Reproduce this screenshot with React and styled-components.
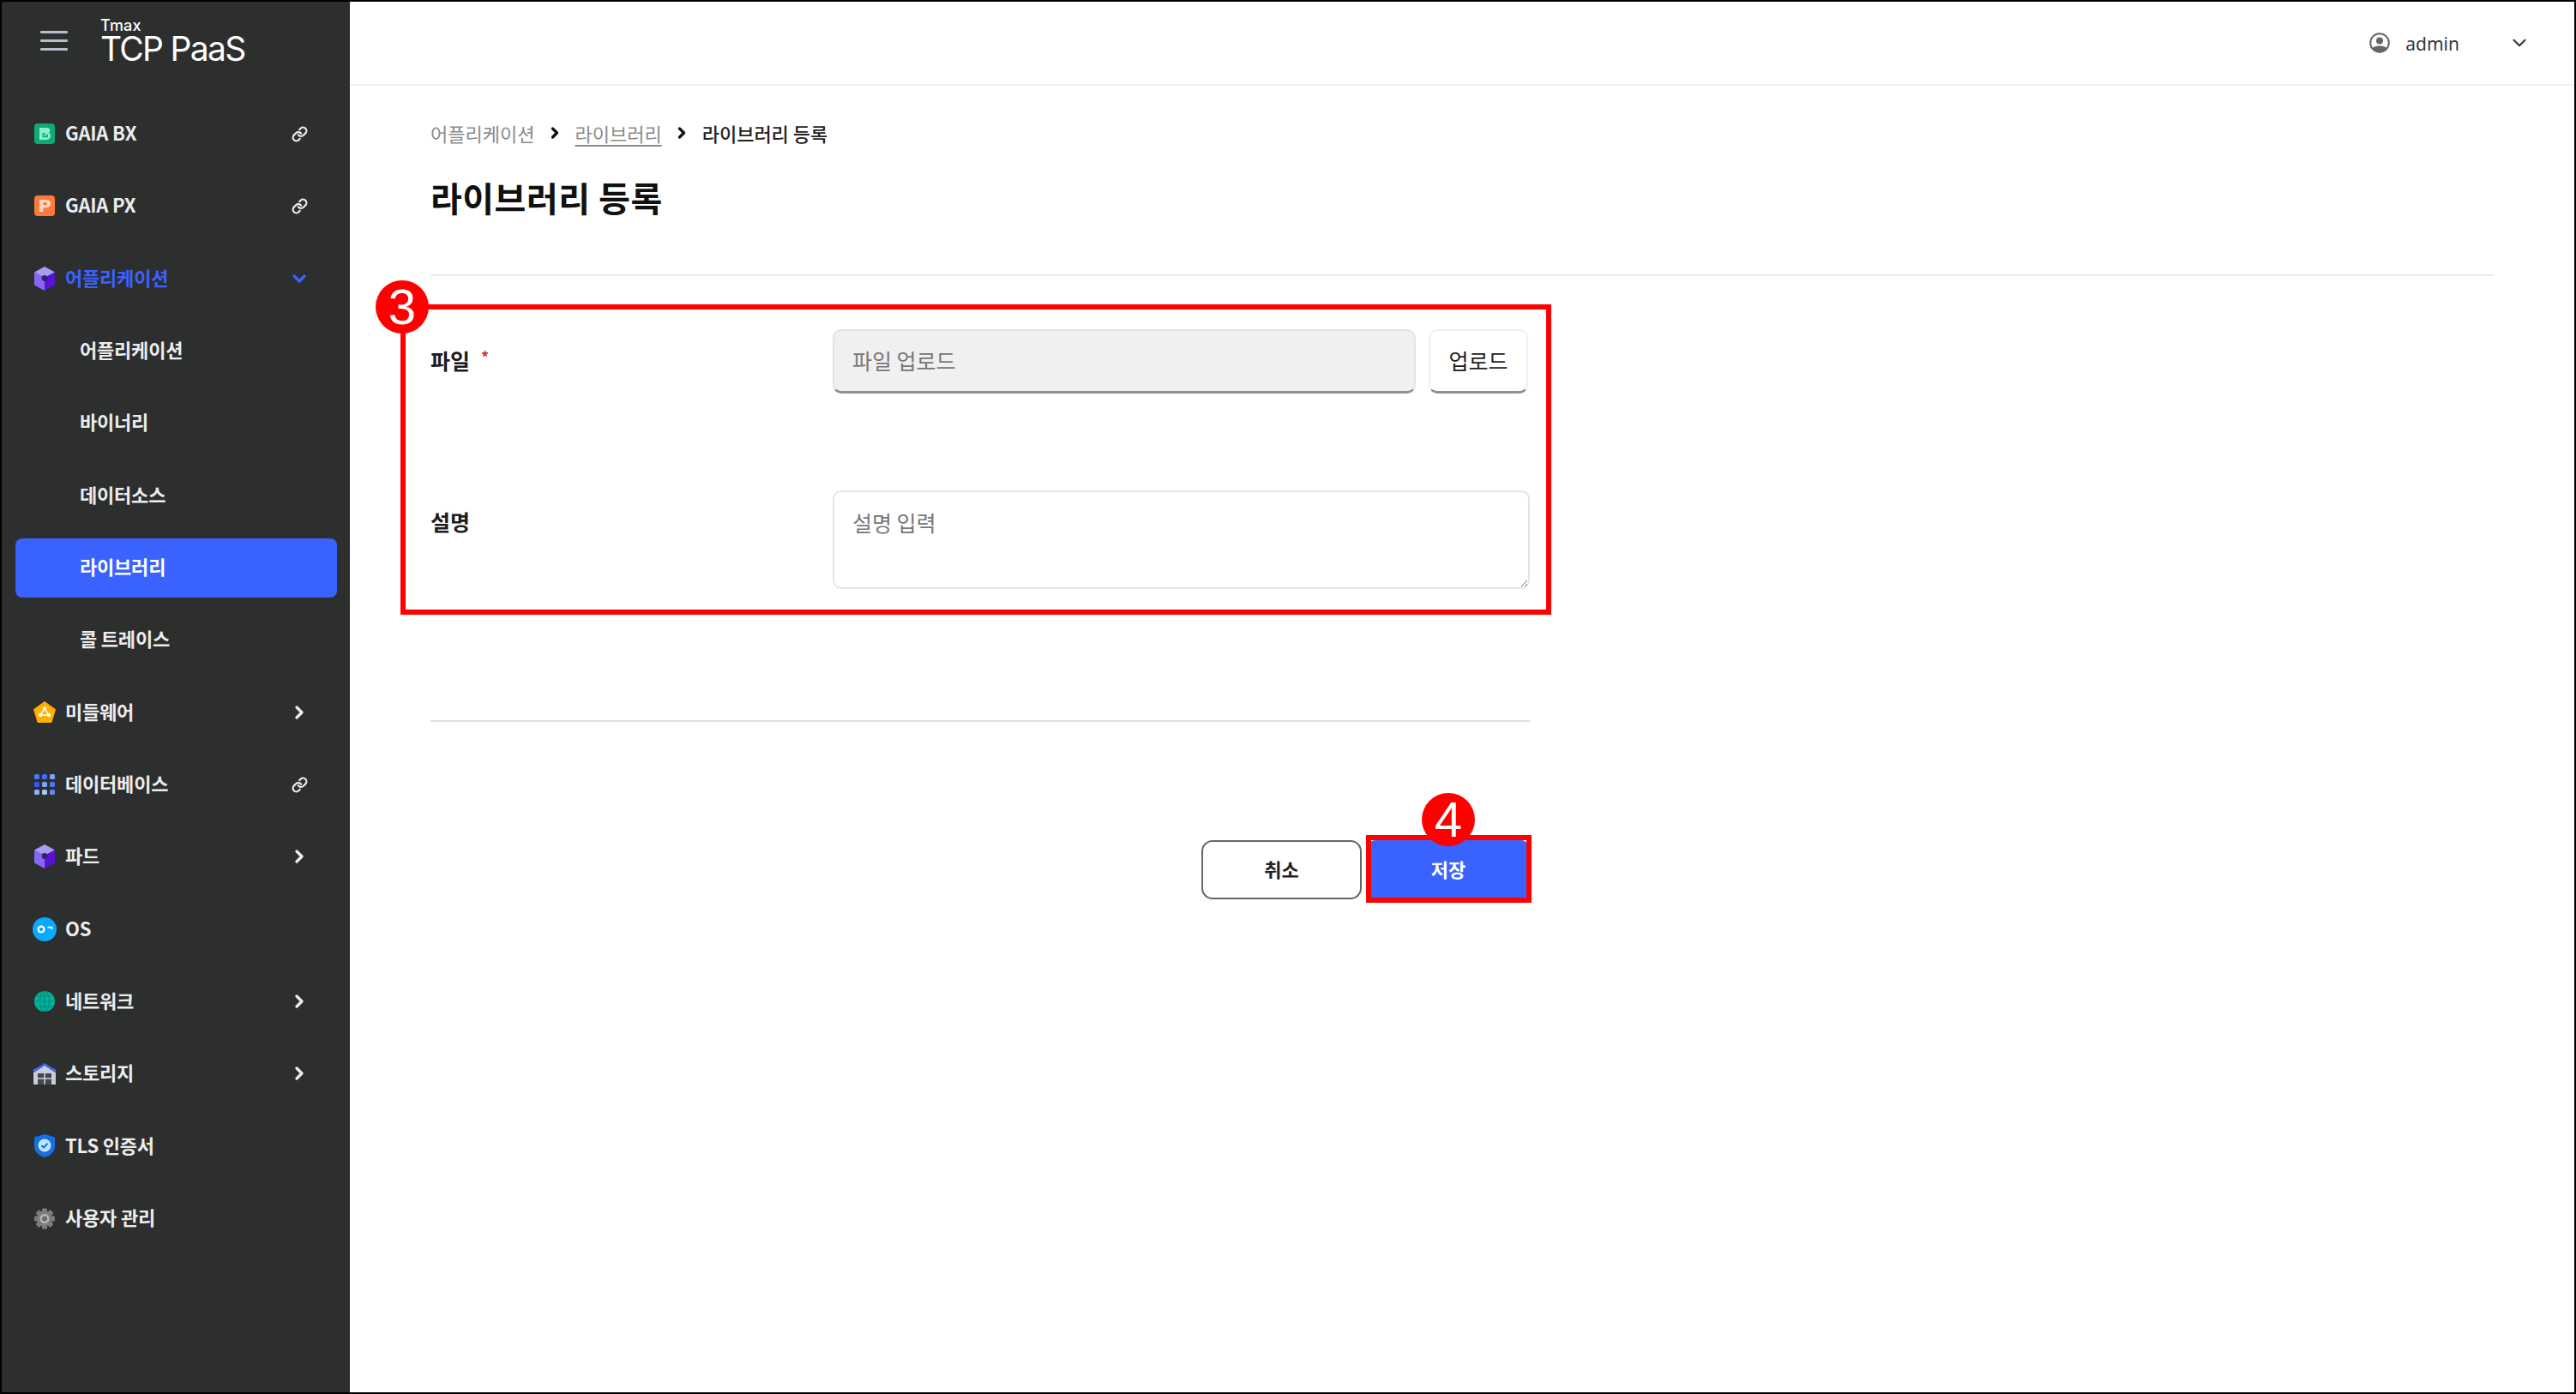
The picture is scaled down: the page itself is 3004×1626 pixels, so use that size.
import React from "react";
import styled, { createGlobalStyle } from "styled-components";
import { Link, ChevronRight, ChevronDown } from "lucide-react";

const FONT = `"Noto Sans CJK KR", "Noto Sans", sans-serif`;
const BLUE = "#3a62ff";
const RED = "#ff0000";

const Global = createGlobalStyle`
  * { box-sizing: border-box; }
  html, body { margin: 0; padding: 0; background: #fff; }
  body { font-family: ${FONT}; }
`;

const Frame = styled.div`
  display: flex;
  width: 3004px;
  height: 1626px;
  border: 2px solid #000;
  background: #fff;
  overflow: hidden;
`;

const Sidebar = styled.aside`
  flex: 0 0 406px;
  background: #2d2e2e;
  display: flex;
  flex-direction: column;
`;

const Brand = styled.div`
  height: 112px;
  display: flex;
  align-items: flex-start;
  padding: 34px 0 0 45px;
  gap: 38px;
`;

const Burger = styled.div`
  width: 32px;
  height: 23px;
  display: flex;
  flex-direction: column;
  justify-content: space-between;
  span { display: block; height: 3px; background: #b7bdcd; border-radius: 1px; }
`;

const Logo = styled.div`
  display: flex;
  flex-direction: column;
  margin-top: -14px;
  color: #fff;
  font-family: "Inter", sans-serif;
`;

const LogoTop = styled.span`
  font-size: 18px;
  font-weight: 500;
  line-height: 15px;
  letter-spacing: 0.2px;
`;

const LogoMain = styled.span`
  font-size: 39px;
  font-weight: 400;
  line-height: 40px;
  letter-spacing: -1.7px;
`;

const Row = styled.div`
  height: 84.33px;
  display: flex;
  align-items: center;
  padding: 0 50px 0 36px;
  font-size: 22px;
  font-weight: 700;
  letter-spacing: -0.2px;
  color: ${(p) => (p.$active ? BLUE : "#ececec")};
`;

const IconSlot = styled.span`
  flex: 0 0 28px;
  height: 28px;
  margin-right: 10px;
  display: flex;
  align-items: center;
  justify-content: center;
`;

const RowLabel = styled.span`
  flex: 1;
  line-height: 1;
  margin-top: -4px;
`;

const TailIcon = styled.span`
  width: 18px;
  height: 18px;
  display: flex;
  align-items: center;
  justify-content: center;
  color: ${(p) => (p.$active ? BLUE : "#ececec")};
`;

const SubRow = styled.div`
  height: 84.33px;
  display: flex;
  align-items: center;
  padding: 0 15px 0 16px;
`;

const SubInner = styled.div`
  flex: 1;
  height: 69px;
  display: flex;
  align-items: center;
  padding: 0 0 4px 75px;
  border-radius: 8px;
  background: ${(p) => (p.$active ? BLUE : "transparent")};
  color: ${(p) => (p.$active ? "#fff" : "#ececec")};
  font-size: 22px;
  font-weight: 700;
  letter-spacing: -0.2px;
`;

const Main = styled.main`
  flex: 1;
  display: flex;
  flex-direction: column;
  min-width: 0;
`;

const Header = styled.header`
  height: 98px;
  flex: 0 0 98px;
  border-bottom: 2px solid #f0f0f6;
  display: flex;
  align-items: center;
  justify-content: flex-end;
  padding: 0 51px 0 0;
  color: #33383f;
`;

const AdminName = styled.span`
  font-family: "Noto Sans", sans-serif;
  font-size: 21px;
  margin: 2px 57px 0 18px;
`;

const Content = styled.div`
  padding: 41px 94px 0;
`;

const Crumbs = styled.nav`
  height: 32px;
  display: flex;
  align-items: center;
  padding-bottom: 4px;
  font-size: 22px;
  line-height: 28px;
`;

const Crumb = styled.span`
  color: ${(p) => (p.$current ? "#222" : "#8a8a8a")};
  font-weight: ${(p) => (p.$current ? 500 : 400)};
  text-decoration: ${(p) => (p.$link ? "underline" : "none")};
  text-underline-offset: 4px;
`;

const CrumbSep = styled.span`
  width: 47px;
  display: flex;
  justify-content: center;
  color: #111;
`;

const Title = styled.h1`
  margin: 32px 0 0;
  font-size: 40px;
  line-height: 50px;
  font-weight: 700;
  letter-spacing: 0.5px;
  color: #111;
`;

const Rule = styled.hr`
  margin: 65px 0 0;
  height: 2px;
  border: 0;
  background: #e8ecf0;
`;

const Form = styled.form`
  position: relative;
  width: 1282px;
  margin-top: 62px;
`;

const Field = styled.div`
  display: flex;
  margin-bottom: ${(p) => p.$mb || 0}px;
`;

const Label = styled.label`
  flex: 0 0 469px;
  height: 75px;
  display: flex;
  align-items: center;
  padding-bottom: 4px;
  font-size: 25px;
  font-weight: 700;
  color: #1d1d1d;
`;

const Required = styled.span`
  margin: -8px 0 0 13px;
  color: #d8302a;
  font-size: 18px;
  font-weight: 700;
`;

const FileInput = styled.input`
  flex: 0 0 680px;
  height: 75px;
  padding: 0 21px 3px;
  border: 2px solid #e4e4e4;
  border-bottom: 3px solid #8b9096;
  border-radius: 10px;
  background: #f0f0f0;
  font-family: ${FONT};
  font-size: 25px;
  outline: none;
  &::placeholder { color: #777; opacity: 1; }
`;

const UploadButton = styled.button`
  flex: 0 0 116px;
  height: 75px;
  margin-left: 15px;
  padding: 0 0 3px;
  border: 2px solid #f0f0f0;
  border-bottom: 3px solid #8b9096;
  border-radius: 10px;
  background: #fff;
  font-family: ${FONT};
  font-size: 25px;
  color: #222;
`;

const Notes = styled.textarea`
  flex: 0 0 813px;
  height: 115px;
  padding: 18px 21px;
  border: 2px solid #e4e4e4;
  border-radius: 10px;
  background: #fff;
  font-family: ${FONT};
  font-size: 25px;
  line-height: 34px;
  outline: none;
  resize: vertical;
  &::placeholder { color: #777; opacity: 1; }
`;

const Callout = styled.div`
  position: absolute;
  left: -35px;
  top: -29px;
  width: 1342px;
  height: 362px;
  border: 6px solid ${RED};
  pointer-events: none;
`;

const Badge = styled.span`
  position: absolute;
  left: ${(p) => p.$left}px;
  top: ${(p) => p.$top}px;
  width: 62px;
  height: 62px;
  border-radius: 50%;
  background: ${RED};
  color: #fff;
  display: flex;
  align-items: center;
  justify-content: center;
  font-family: "Liberation Sans", sans-serif;
  font-size: 58px;
  line-height: 1;
`;

const SectionRule = styled.hr`
  width: 1282px;
  margin: 153px 0 0;
  height: 2px;
  border: 0;
  background: #dedede;
`;

const Actions = styled.div`
  width: 1280px;
  margin-top: 138px;
  display: flex;
  justify-content: flex-end;
  gap: 8px;
`;

const CancelButton = styled.button`
  width: 187px;
  height: 69px;
  padding: 0 0 4px;
  border: 2px solid #666;
  border-radius: 13px;
  background: #fff;
  color: #222;
  font-family: ${FONT};
  font-size: 22px;
  font-weight: 700;
`;

const SaveWrap = styled.div`
  position: relative;
  width: 186px;
  height: 69px;
`;

const SaveButton = styled.button`
  width: 100%;
  height: 100%;
  padding: 0 0 4px;
  border: 0;
  border-radius: 8px;
  background: ${BLUE};
  color: #fff;
  font-family: ${FONT};
  font-size: 22px;
  font-weight: 700;
`;

const SaveCallout = styled.div`
  position: absolute;
  left: -3px;
  top: -6px;
  width: 193px;
  height: 79px;
  border: 6px solid ${RED};
`;

const BxIcon = () => (
  <svg width="24" height="24" viewBox="0 0 24 24">
    <rect width="24" height="24" rx="4" fill="#0cab78" />
    <path d="M6 5h8.500c2.400 0 3.800 1.400 3.800 3.300 0 1.200-.6 2.200-1.600 2.800 1.300.6 2.200 1.700 2.200 3.200 0 2.600-1.900 4.700-4.600 4.700H6z" fill="#8ff0c8" />
    <path d="M9.500 11.200h3.200v2H11v1.400h3v-1.800h2v3.400H9.500z" fill="#0cab78" />
  </svg>
);

const PxIcon = () => (
  <svg width="24" height="24" viewBox="0 0 24 24">
    <rect width="24" height="24" rx="4" fill="#ff7a3a" />
    <path d="M6 5h8c3 0 5 2 5 4.600s-2 4.600-5 4.600h-3.600V19H6z" fill="#ffd9c2" />
    <rect x="10.400" y="8" width="4.400" height="3.200" rx="1" fill="#ff7a3a" />
  </svg>
);

const CubeIcon = () => (
  <svg width="24" height="28" viewBox="0 0 24 28">
    <path d="M12 0l12 6.500L12 13 0 6.500z" fill="#a99cf3" />
    <path d="M0 6.500L12 13v15L0 21.500z" fill="#8667f2" />
    <path d="M24 6.500L12 13v15l12-6.500z" fill="#5a12d2" />
    <circle cx="12" cy="13.500" r="3.400" fill="#33206e" />
  </svg>
);

const MiddlewareIcon = () => (
  <svg width="26" height="25" viewBox="0 0 26 25">
    <path d="M13 .5L25.500 9.600 21 24.500H5L.5 9.600z" fill="#ffb000" stroke="#ffb000" strokeLinejoin="round" />
    <path d="M13 8.500l-5 7.500h10z" fill="none" stroke="#fff" strokeWidth="1.400" />
    <circle cx="13" cy="8.500" r="2.200" fill="#fff" />
    <circle cx="8" cy="16" r="2.200" fill="#fff" />
    <circle cx="18" cy="16" r="2.200" fill="#fff" />
  </svg>
);

const GridIcon = () => {
  const fills = ["#4a78f5", "#3f6cf2", "#7ca3f5", "#2f5bff", "#7ea8f7", "#4a78f5", "#8fb2f7", "#a9c6f9", "#5a8bf5"];
  return (
    <svg width="24" height="24" viewBox="0 0 24 24">
      {fills.map((f, i) => (
        <rect key={i} x={(i % 3) * 9} y={Math.floor(i / 3) * 9} width="6" height="6" rx="1.600" fill={f} />
      ))}
    </svg>
  );
};

const OsIcon = () => (
  <svg width="28" height="28" viewBox="0 0 28 28">
    <circle cx="14" cy="14" r="14" fill="#0aa9ff" />
    <circle cx="10" cy="14" r="3.400" fill="none" stroke="#fff" strokeWidth="2.200" />
    <path d="M17.500 11.600h5v2.600" fill="none" stroke="#fff" strokeWidth="1.600" />
  </svg>
);

const GlobeIcon = () => (
  <svg width="24" height="24" viewBox="0 0 24 24">
    <circle cx="12" cy="12" r="12" fill="#00b59f" />
    <g fill="none" stroke="#078577" strokeWidth="1.200">
      <ellipse cx="12" cy="12" rx="5.500" ry="12" />
      <path d="M12 0v24M0 12h24M2 6h20M2 18h20" />
    </g>
  </svg>
);

const StorageIcon = () => (
  <svg width="26" height="26" viewBox="0 0 26 26">
    <path d="M0 9L13 2l13 7v17H0z" fill="#c9ced8" />
    <path d="M0 9.500L13 1l13 8.500v3L13 4 0 12.500z" fill="#3a62ff" />
    <rect x="5" y="13" width="16" height="13" fill="#44474d" />
    <path d="M5 19h16M13 13v13" stroke="#c9ced8" strokeWidth="1.600" />
  </svg>
);

const ShieldIcon = () => (
  <svg width="24" height="27" viewBox="0 0 24 27">
    <path d="M12 0l12 3.500V14c0 6.500-5 10.800-12 13C5 24.800 0 20.500 0 14V3.500z" fill="#1570e4" />
    <circle cx="12" cy="13" r="7.500" fill="#bfe4ff" />
    <path d="M8.500 13l2.500 2.600 4.500-4.800" fill="none" stroke="#1570e4" strokeWidth="2" />
  </svg>
);

const GearIcon = () => (
  <svg width="24" height="25" viewBox="0 0 24 24">
    <g fill="#7c7c7c">
      {[0, 45, 90, 135].map((a) => (
        <rect key={a} x="9" y="0" width="6" height="24" rx="1.200" transform={`rotate(${a} 12 12)`} />
      ))}
      <circle cx="12" cy="12" r="9" />
    </g>
    <circle cx="12" cy="12" r="5.500" fill="#b5b5b5" />
    <circle cx="12" cy="12" r="3" fill="#6a6a6a" />
  </svg>
);

const UserIcon = () => (
  <svg width="24" height="24" viewBox="0 0 24 24">
    <defs>
      <clipPath id="avatarClip"><circle cx="12" cy="12" r="10.500" /></clipPath>
    </defs>
    <circle cx="12" cy="12" r="10.800" fill="none" stroke="#666" strokeWidth="2" />
    <circle cx="12" cy="9.500" r="4" fill="#666" />
    <path d="M2 24v-4c2-3.500 6-4.500 10-4.500s8 1 10 4.500v4z" fill="#666" clipPath="url(#avatarClip)" />
  </svg>
);

const menuTop = [
  { label: "GAIA BX", icon: <BxIcon />, tail: "link" },
  { label: "GAIA PX", icon: <PxIcon />, tail: "link" },
  { label: "어플리케이션", icon: <CubeIcon />, tail: "down", active: true },
];
const subMenu = [
  { label: "어플리케이션" },
  { label: "바이너리" },
  { label: "데이터소스" },
  { label: "라이브러리", active: true },
  { label: "콜 트레이스" },
];
const menuBottom = [
  { label: "미들웨어", icon: <MiddlewareIcon />, tail: "right" },
  { label: "데이터베이스", icon: <GridIcon />, tail: "link" },
  { label: "파드", icon: <CubeIcon />, tail: "right" },
  { label: "OS", icon: <OsIcon /> },
  { label: "네트워크", icon: <GlobeIcon />, tail: "right" },
  { label: "스토리지", icon: <StorageIcon />, tail: "right" },
  { label: "TLS 인증서", icon: <ShieldIcon /> },
  { label: "사용자 관리", icon: <GearIcon /> },
];

const Tail = ({ kind, active }) => {
  if (!kind) return null;
  return (
    <TailIcon $active={active}>
      {kind === "link" && <Link size={19} strokeWidth={2.8} style={{ flex: "none" }} />}
      {kind === "right" && <ChevronRight size={24} strokeWidth={3.4} style={{ flex: "none" }} />}
      {kind === "down" && <ChevronDown size={24} strokeWidth={3.4} style={{ flex: "none" }} />}
    </TailIcon>
  );
};

const MenuRow = ({ item }) => (
  <Row $active={item.active}>
    <IconSlot>{item.icon}</IconSlot>
    <RowLabel>{item.label}</RowLabel>
    <Tail kind={item.tail} active={item.active} />
  </Row>
);

export default function App() {
  return (
    <>
      <Global />
      <Frame>
        <Sidebar>
          <Brand>
            <Burger><span /><span /><span /></Burger>
            <Logo>
              <LogoTop>Tmax</LogoTop>
              <LogoMain>TCP PaaS</LogoMain>
            </Logo>
          </Brand>
          {menuTop.map((m) => <MenuRow key={m.label} item={m} />)}
          {subMenu.map((s) => (
            <SubRow key={s.label}>
              <SubInner $active={s.active}>{s.label}</SubInner>
            </SubRow>
          ))}
          {menuBottom.map((m) => <MenuRow key={m.label} item={m} />)}
        </Sidebar>
        <Main>
          <Header>
            <UserIcon />
            <AdminName>admin</AdminName>
            <ChevronDown size={26} strokeWidth={2} color="#33383f" />
          </Header>
          <Content>
            <Crumbs>
              <Crumb>어플리케이션</Crumb>
              <CrumbSep><ChevronRight size={20} strokeWidth={4} /></CrumbSep>
              <Crumb $link>라이브러리</Crumb>
              <CrumbSep><ChevronRight size={20} strokeWidth={4} /></CrumbSep>
              <Crumb $current>라이브러리 등록</Crumb>
            </Crumbs>
            <Title>라이브러리 등록</Title>
            <Rule />
            <Form>
              <Field $mb={113}>
                <Label>파일<Required>*</Required></Label>
                <FileInput placeholder="파일 업로드" readOnly />
                <UploadButton type="button">업로드</UploadButton>
              </Field>
              <Field>
                <Label>설명</Label>
                <Notes placeholder="설명 입력" />
              </Field>
              <Callout />
              <Badge $left={-64} $top={-57}>3</Badge>
            </Form>
            <SectionRule />
            <Actions>
              <CancelButton type="button">취소</CancelButton>
              <SaveWrap>
                <SaveButton type="button">저장</SaveButton>
                <SaveCallout />
                <Badge $left={62} $top={-55}>4</Badge>
              </SaveWrap>
            </Actions>
          </Content>
        </Main>
      </Frame>
    </>
  );
}
